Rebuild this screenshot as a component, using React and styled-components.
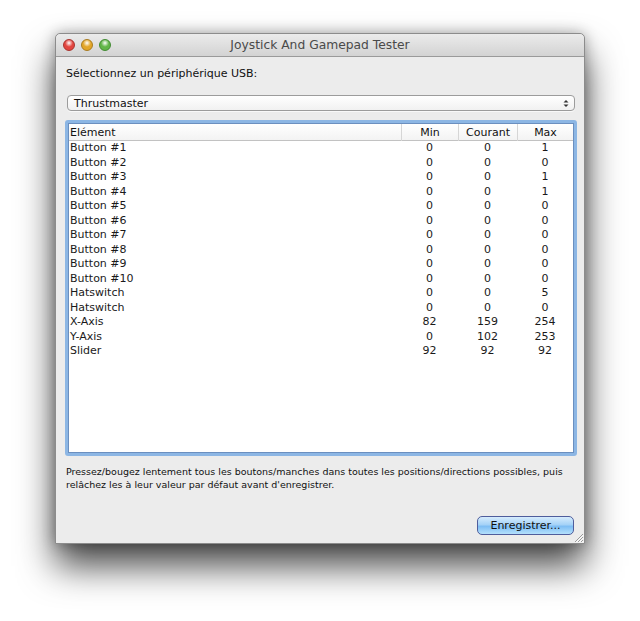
import React from "react";
import styled, { createGlobalStyle } from "styled-components";

const rows = [
  ["Button #1", 0, 0, 1],
  ["Button #2", 0, 0, 0],
  ["Button #3", 0, 0, 1],
  ["Button #4", 0, 0, 1],
  ["Button #5", 0, 0, 0],
  ["Button #6", 0, 0, 0],
  ["Button #7", 0, 0, 0],
  ["Button #8", 0, 0, 0],
  ["Button #9", 0, 0, 0],
  ["Button #10", 0, 0, 0],
  ["Hatswitch", 0, 0, 5],
  ["Hatswitch", 0, 0, 0],
  ["X-Axis", 82, 159, 254],
  ["Y-Axis", 0, 102, 253],
  ["Slider", 92, 92, 92],
];

export default function App() {
  return (
    <>
      <GlobalStyle />
      <Page>
        <Window>
          <TitleBar>
            <Lights>
              <Light color="#e2453f" edge="#a9302b" />
              <Light color="#e3a628" edge="#a97a1c" />
              <Light color="#62b649" edge="#3f8a2f" />
            </Lights>
            <Title>Joystick And Gamepad Tester</Title>
          </TitleBar>
          <Content>
            <Label>Sélectionnez un périphérique USB:</Label>
            <Select>
              <span>Thrustmaster</span>
              <Arrows>
                <svg width="6" height="9" viewBox="0 0 6 9">
                  <path d="M0.5 3.5 L3 1 L5.5 3.5 Z" fill="#333" />
                  <path d="M0.5 5.5 L3 8 L5.5 5.5 Z" fill="#333" />
                </svg>
              </Arrows>
            </Select>
            <TableFrame>
              <Table>
                <HeaderRow>
                  <HeadCell>Elément</HeadCell>
                  <HeadCell num sep>Min</HeadCell>
                  <HeadCell num sep>Courant</HeadCell>
                  <HeadCell num sep>Max</HeadCell>
                </HeaderRow>
                {rows.map((r, i) => (
                  <Row key={i}>
                    <Cell>{r[0]}</Cell>
                    <Cell num>{r[1]}</Cell>
                    <Cell num>{r[2]}</Cell>
                    <Cell num>{r[3]}</Cell>
                  </Row>
                ))}
              </Table>
            </TableFrame>
            <Help>
              Pressez/bougez lentement tous les boutons/manches dans toutes les
              positions/directions possibles, puis relâchez les à leur valeur
              par défaut avant d'enregistrer.
            </Help>
            <Footer>
              <SaveButton>Enregistrer...</SaveButton>
              <Grip>
                <svg width="12" height="12" viewBox="0 0 12 12">
                  <path d="M11 3 L3 11 M11 6 L6 11 M11 9 L9 11" stroke="#9a9a9a" strokeWidth="1" />
                  <path d="M11.5 4 L4 11.5 M11.5 7 L7 11.5 M11.5 10 L10 11.5" stroke="#fff" strokeWidth="1" />
                </svg>
              </Grip>
            </Footer>
          </Content>
        </Window>
      </Page>
    </>
  );
}

//styles

const GlobalStyle = createGlobalStyle`
  html, body {
    margin: 0;
    padding: 0;
    background: #fff;
  }
  body {
    font-family: "DejaVu Sans", "Liberation Sans", sans-serif;
    color: #111;
  }
`;

const Page = styled.div`
  width: 640px;
  height: 621px;
  padding: 33px 0 0 55px;
  box-sizing: border-box;
  overflow: hidden;
`;

const Window = styled.div`
  width: 530px;
  height: 511px;
  display: flex;
  flex-direction: column;
  background: #ececec;
  border: 1px solid #8c8c8c;
  border-radius: 5px 5px 0 0;
  box-sizing: border-box;
  box-shadow: 0 22px 36px rgba(0, 0, 0, 0.72), 0 0 14px rgba(0, 0, 0, 0.3);
`;

const TitleBar = styled.div`
  height: 22px;
  flex: none;
  position: relative;
  display: flex;
  align-items: center;
  justify-content: center;
  background: linear-gradient(#ebebeb, #d3d3d3);
  border-bottom: 1px solid #9a9a9a;
  border-radius: 5px 5px 0 0;
`;

const Lights = styled.div`
  position: absolute;
  left: 7px;
  top: 5px;
  display: flex;
  gap: 6px;
`;

const Light = styled.div`
  width: 12px;
  height: 12px;
  border-radius: 50%;
  box-sizing: border-box;
  border: 1px solid ${({ edge }) => edge};
  background: radial-gradient(circle at 50% 30%, #fff 0, ${({ color }) => color} 45%, ${({ color }) => color} 100%);
`;

const Title = styled.div`
  font-size: 12.3px;
  color: #4a4a4a;
`;

const Content = styled.div`
  flex: 1;
  display: flex;
  flex-direction: column;
  padding: 10px 9px 0 9px;
`;

const Label = styled.div`
  font-size: 11px;
  line-height: 13px;
  margin-left: 1px;
`;

const Select = styled.div`
  margin: 15px 0 0 2px;
  width: 508px;
  height: 16px;
  box-sizing: border-box;
  display: flex;
  align-items: center;
  justify-content: space-between;
  padding: 0 5px 0 6px;
  font-size: 11px;
  background: linear-gradient(#ffffff, #f1f1f1);
  border: 1px solid #9c9c9c;
  border-radius: 4px;
  box-shadow: 0 1px 0 rgba(255, 255, 255, 0.7);
`;

const Arrows = styled.div`
  display: flex;
  align-items: center;
`;

const TableFrame = styled.div`
  margin-top: 9px;
  width: 512px;
  height: 336px;
  box-sizing: border-box;
  border: 2px solid #8cb6e4;
  border-radius: 3px;
  padding: 1px;
  background: #8cb6e4;
`;

const Table = styled.div`
  height: 100%;
  background: #fff;
  border: 1px solid #6b8fbf;
  box-sizing: border-box;
`;

const HeaderRow = styled.div`
  display: grid;
  grid-template-columns: 1fr 57px 59px 56px;
  height: 16px;
  border-bottom: 1px solid #c2c2c2;
  background: linear-gradient(#fff, #f3f3f3);
`;

const HeadCell = styled.div`
  font-size: 11px;
  line-height: 17px;
  padding-left: ${({ num }) => (num ? "0" : "1px")};
  text-align: ${({ num }) => (num ? "center" : "left")};
  border-left: ${({ sep }) => (sep ? "1px solid #d6d6d6" : "none")};
`;

const Row = styled.div`
  display: grid;
  grid-template-columns: 1fr 57px 59px 56px;
  height: 14.5px;
`;

const Cell = styled.div`
  font-size: 11px;
  line-height: 14.5px;
  padding-left: ${({ num }) => (num ? "0" : "1px")};
  text-align: ${({ num }) => (num ? "center" : "left")};
  color: #1a1a1a;
`;

const Help = styled.div`
  margin: 9px 0 0 1px;
  font-size: 9.5px;
  line-height: 13px;
  width: 500px;
  color: #111;
`;

const Footer = styled.div`
  flex: 1;
  display: flex;
  justify-content: flex-end;
  align-items: flex-end;
  position: relative;
  padding-bottom: 8px;
`;

const SaveButton = styled.div`
  width: 97px;
  height: 19px;
  box-sizing: border-box;
  margin-right: 1px;
  display: flex;
  align-items: center;
  justify-content: center;
  font-size: 11px;
  color: #111;
  border: 1px solid #4f5d9c;
  border-radius: 5px;
  background: linear-gradient(#d6ecfd 0%, #a5d2f7 45%, #7ebef4 55%, #b4e0fc 100%);
`;

const Grip = styled.div`
  position: absolute;
  right: -9px;
  bottom: 0;
  width: 14px;
  height: 14px;
  display: flex;
  align-items: flex-end;
  justify-content: flex-end;
`;
